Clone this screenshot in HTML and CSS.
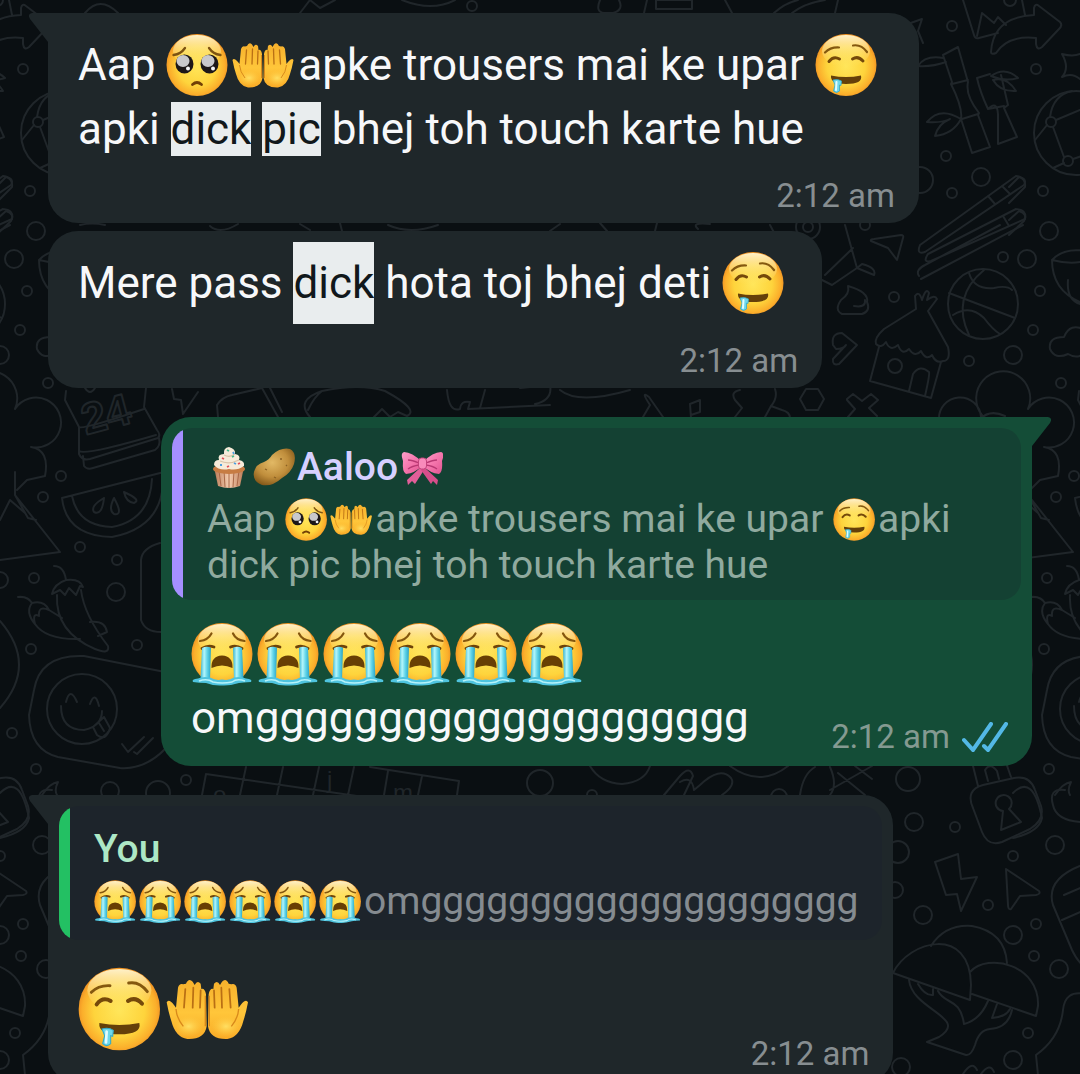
FILE: index.html
```html
<!DOCTYPE html>
<html lang="en">
<head>
<meta charset="utf-8">
<meta name="viewport" content="width=device-width, initial-scale=1">
<title>Chat</title>
<link rel="stylesheet" href="styles.css">
</head>
<body>
<svg class="wallpaper" aria-hidden="true">
  <defs>
    <radialGradient id="skin" cx="50%" cy="52%" r="52%">
      <stop offset="0" stop-color="#ffe65a"/><stop offset=".6" stop-color="#fed43c"/><stop offset=".88" stop-color="#fbae2b"/><stop offset="1" stop-color="#ee8f22"/>
    </radialGradient>
    <linearGradient id="shine" x1="0" y1="0" x2="0" y2="1">
      <stop offset="0" stop-color="#fff6d2" stop-opacity=".95"/><stop offset="1" stop-color="#ffe56b" stop-opacity="0"/>
    </linearGradient>
    <linearGradient id="tear" x1="0" y1="0" x2="1" y2="0">
      <stop offset="0" stop-color="#35b4d3"/><stop offset=".35" stop-color="#b4f6fb"/><stop offset=".65" stop-color="#5fd3e8"/><stop offset="1" stop-color="#2aa3c4"/>
    </linearGradient>
    <linearGradient id="palm" x1="0" y1="0" x2="0" y2="1">
      <stop offset="0" stop-color="#f6b02c"/><stop offset=".55" stop-color="#ffc63a"/><stop offset="1" stop-color="#f9ab27"/>
    </linearGradient>
    <radialGradient id="heel"><stop offset="0" stop-color="#ffdf62"/><stop offset="1" stop-color="#ffcb40" stop-opacity="0"/></radialGradient>
    <linearGradient id="cup" x1="0" y1="0" x2="1" y2="0">
      <stop offset="0" stop-color="#b97955"/><stop offset=".5" stop-color="#f5cdb0"/><stop offset="1" stop-color="#b97955"/>
    </linearGradient>
    <radialGradient id="spud" cx="45%" cy="38%" r="65%"><stop offset="0" stop-color="#e2b965"/><stop offset=".6" stop-color="#c08e3c"/><stop offset="1" stop-color="#845819"/></radialGradient>
    <linearGradient id="ribbon" x1="0" y1="0" x2="1" y2="1"><stop offset="0" stop-color="#ff9fc9"/><stop offset=".5" stop-color="#f576ad"/><stop offset="1" stop-color="#e0528f"/></linearGradient>

    <g id="e-face">
      <ellipse cx="33" cy="33" rx="30.500" ry="31" fill="url(#skin)"/>
      <ellipse cx="33" cy="19" rx="24" ry="16" fill="url(#shine)"/>
    </g>
    <symbol id="e-plead" viewBox="2 0 66 66">
      <use href="#e-face"/>
      <path d="M9.500 23Q17 22 21 16M45 16Q49 22 56.500 23" fill="none" stroke="#7d5312" stroke-width="2.300" stroke-linecap="round"/>
      <ellipse cx="20.500" cy="32" rx="9" ry="9.500" fill="#1c1718"/><ellipse cx="45.500" cy="32" rx="9" ry="9.500" fill="#1c1718"/>
      <ellipse cx="19" cy="29" rx="6.500" ry="6" fill="#c9c9cc"/><ellipse cx="44" cy="29" rx="6.500" ry="6" fill="#c9c9cc"/>
      <circle cx="24" cy="36.500" r="2" fill="#f4f4f6"/><circle cx="49" cy="36.500" r="2" fill="#f4f4f6"/>
      <path d="M28.500 52.500Q33 48.500 37.500 52.500" fill="none" stroke="#724006" stroke-width="2.800" stroke-linecap="round"/>
    </symbol>
    <symbol id="e-drool" viewBox="2 0 66 66">
      <use href="#e-face"/>
      <path d="M12 20.500Q17.500 15 26 15.500M40 13.500Q48 12 54 20" fill="none" stroke="#84580f" stroke-width="2.200" stroke-linecap="round"/>
      <path d="M16 29.500Q20.500 23.500 26.500 27M39.500 27Q45 23.500 50 29" fill="none" stroke="#75490a" stroke-width="3" stroke-linecap="round"/>
      <path d="M18 43.500Q33 46.500 48 43.500Q50 52 33 52Q17 52 18 43.500Z" fill="#65400a"/>
      <path d="M20 48Q25 46.500 28.500 49L28 53.500L26.500 53L26.500 59Q23.500 62 20.500 59L22 53Z" fill="#6fd8ea" stroke="#35aac8" stroke-width=".8"/>
      <path d="M23.500 50L23 58" stroke="#e1fcff" stroke-width="2" stroke-linecap="round"/>
    </symbol>
    <symbol id="e-cry" viewBox="2 0 66 66">
      <use href="#e-face"/>
      <path d="M11 20Q19 19 22.500 12.500M44 12.500Q47 19 55.500 20" fill="none" stroke="#84560e" stroke-width="2.200" stroke-linecap="round"/>
      <path d="M13 27.500Q19 23.500 25 26M41.500 26Q47 23.500 53 27.500" fill="none" stroke="#6e4309" stroke-width="2.800" stroke-linecap="round"/>
      <path d="M22.500 47Q22 35 33 34.500Q44 35 43.500 47Q33 42 22.500 47Z" fill="#683f04"/>
      <path d="M13 27Q18 24.500 22 27L21 58H11.500Z" fill="url(#tear)"/><path d="M53 27Q48 24.500 44 27L45 58H54.500Z" fill="url(#tear)"/>
      <path d="M4 61Q2 58 9 57.500Q14 55 21 56.500Q27 60 33 58.500Q40 60 45 56.500Q52 55 57 57.500Q64 58 62 61Q54 61.500 50 62Q40 65 33 64.500Q25 65 17 62Q10 62 4 61Z" fill="#4fc4df"/>
      <path d="M10 60Q18 57 24 61Q33 63 43 61Q48 57 56 60" fill="none" stroke="#b5f3fa" stroke-width="1.600"/>
    </symbol>
    <g id="e-hand">
      <path d="M32 22Q31 17 28.500 18L28 14Q25.500 11 23.500 15L22 12.500Q19 9.500 17 14L15 14.500Q12 13.500 11 17L9.500 32L8 30Q4 25 2.500 28Q4 36 6 42Q9 54 18 55.500Q31 56 32.500 46Z" fill="url(#palm)"/>
      <ellipse cx="19" cy="46" rx="11" ry="8" fill="url(#heel)"/>
      <path d="M16.500 18L15.500 32M22.500 17L22 32M28 19L27.500 32" stroke="#b96f14" stroke-width="1.300" stroke-linecap="round"/>
      <path d="M9.500 33Q10 40 15 46M31.500 23V46" stroke="#d8891b" stroke-width="1" fill="none"/>
    </g>
    <symbol id="e-palms" viewBox="2 0 66 66">
      <use href="#e-hand"/><g transform="matrix(-1 0 0 1 66 0)"><use href="#e-hand"/></g>
    </symbol>
    <symbol id="e-cupcake" viewBox="0 0 45 45">
      <path d="M7 22H37L33 41Q22 45 11 41Z" fill="url(#cup)"/>
      <path d="M12 26L14 41M17 26L18 42M22 26V43M27 26L26 42M32 26L30 41" stroke="#a96847" stroke-width="1"/>
      <ellipse cx="22" cy="24" rx="16" ry="5" fill="#c77c43"/>
      <path d="M7 20Q7 15 12 15Q10 9 17 9Q16 3 22 2Q29 4 28 9Q34 10 32 15Q38 16 37 21Q30 26 22 24Q12 26 7 20Z" fill="#f7ebd9"/>
      <path d="M13 16Q22 20 32 15M17 10Q23 13 28 9" fill="none" stroke="#d9c3a7" stroke-width="1.200"/>
      <path d="M20 5l2 1M25 12l2-1" stroke="#46b88a" stroke-width="1.800"/><path d="M15 13l2 1M31 19l2-1M20 22l2-1" stroke="#e24d57" stroke-width="1.800"/><path d="M26 7l1 2M13 20l2 0M27 18l2 1" stroke="#4b9fe0" stroke-width="1.800"/>
    </symbol>
    <symbol id="e-potato" viewBox="0 0 45 45">
      <path d="M20 10Q29 2 38 4Q45 8 42 19Q39 28 30 33Q20 42 10 40Q0 36 2 27Q4 19 12 17Q17 15 20 10Z" fill="url(#spud)"/>
      <path d="M13 24l2 1M28 14l2 0M22 32l2 1M34 20l1 1" stroke="#8b6224" stroke-width="1.300"/>
    </symbol>
    <symbol id="e-bow" viewBox="-2 0 45 45">
      <path d="M21 22L7 35L8 40L12 36L15 39L24 25Z" fill="#e25e99"/><path d="M24 22L38 35L37 40L33 36L31 39L21 25Z" fill="#d74e8b"/>
      <path d="M22 17Q12 7 4 7Q0 8 3 16Q2 27 6 29Q15 28 22 21Z" fill="url(#ribbon)"/><path d="M23 17Q33 7 41 7Q45 8 42 16Q43 27 39 29Q30 28 23 21Z" fill="url(#ribbon)"/>
      <path d="M19 18Q12 15 8 15M19 20Q12 21 8 24M26 18Q33 15 37 15M26 20Q33 21 37 24" stroke="#b93873" stroke-width="1.300" fill="none"/>
      <rect x="18.500" y="13" width="8" height="11" rx="3" fill="#f88bbb" stroke="#c4437c" stroke-width="1"/>
    </symbol>

    <g id="doodles">
      <circle cx="472" cy="6" r="5"/><circle cx="952" cy="26" r="5"/><circle cx="1010" cy="0" r="6"/><circle cx="1036" cy="69" r="5"/><circle cx="946" cy="156" r="5"/><circle cx="981" cy="177" r="9"/><circle cx="952" cy="193" r="5"/><circle cx="1043" cy="191" r="5"/><circle cx="920" cy="180" r="13"/>
      <circle cx="1049" cy="231" r="9"/><circle cx="1027" cy="259" r="9"/><circle cx="1003" cy="257" r="5"/><circle cx="1040" cy="291" r="5"/><circle cx="1033" cy="330" r="5"/><circle cx="1013" cy="355" r="9"/><circle cx="969" cy="361" r="5"/><circle cx="1061" cy="383" r="5"/><circle cx="894" cy="297" r="5"/><circle cx="865" cy="225" r="5"/>
      <circle cx="61" cy="476" r="5"/><circle cx="43" cy="497" r="5"/><circle cx="80" cy="547" r="5"/><circle cx="117" cy="560" r="5"/><circle cx="34" cy="578" r="5"/><circle cx="116" cy="592" r="9"/><circle cx="1013" cy="580" r="8"/>
      <circle cx="31" cy="649" r="5"/><circle cx="137" cy="645" r="5"/><circle cx="12" cy="733" r="5"/><circle cx="36" cy="769" r="5"/><circle cx="110" cy="791" r="9"/><circle cx="186" cy="780" r="5"/><circle cx="158" cy="793" r="12"/><circle cx="592" cy="795" r="5"/><circle cx="540" cy="783" r="13"/><circle cx="779" cy="797" r="8"/>
      <circle cx="908" cy="779" r="12"/><circle cx="914" cy="822" r="9"/><circle cx="955" cy="827" r="5"/><circle cx="898" cy="852" r="11"/><circle cx="895" cy="890" r="8"/><circle cx="923" cy="915" r="9"/><circle cx="1013" cy="856" r="5"/><circle cx="1055" cy="845" r="9"/><circle cx="988" cy="905" r="5"/><circle cx="1036" cy="924" r="5"/><circle cx="1013" cy="935" r="9"/><circle cx="1034" cy="956" r="5"/><circle cx="1059" cy="969" r="9"/><circle cx="1028" cy="1033" r="5"/><circle cx="1013" cy="1060" r="9"/><circle cx="901" cy="1067" r="9"/>
      <!-- picture and arrow -->
      <path d="M963 0L974 35Q975 39 979 38L998 33M977 36L982 13L994 23L998 17L1006 25M1022 0L1025 15M991 52Q993 17 1034 15V8Q1035 3 1039 6L1060 22Q1063 25 1059 29L1042 47Q1037 51 1036 44V38Q1008 35 996 53Q991 55 991 52"/>
      <!-- mountains and stars along the top edge -->
      <path d="M85 13Q100 -5 118 13M300 13L310 0L320 8L335 0M600 0Q595 12 604 13H613Q624 10 619 0M644 13L647 0M656 0H692V9H656ZM725 0L732 13M774 13Q785 3 798 0M792 13Q805 3 825 0M835 13L838 0M402 0Q432 12 455 0"/>
      <path d="M1062 54Q1073 57 1080 54M1062 54Q1070 68 1062 77Q1072 72 1080 79M905 25L922 19L918 31L923 43"/>
      <!-- bamboo -->
      <path d="M943 55L958 47L968 82Q965 95 979 113L978 115L990 147L972 153L961 119Q963 108 951 84L952 82ZM952 84L968 80M962 119L978 114M977 78L990 74M1001 75L1008 105L1004 108L1017 137L998 144V114Q997 100 988 109Q980 92 977 78M988 109L1004 106M943 58Q925 55 918 66Q932 67 946 62M991 76Q1005 66 1018 78Q1005 82 991 76M993 80Q1007 76 1016 91Q1000 92 993 80M961 119Q940 106 927 122Q943 123 950 119Q938 124 935 136Q953 134 961 119"/>
      <!-- beach ball -->
      <circle cx="1076" cy="133" r="42"/><circle cx="1051" cy="122" r="5"/><circle cx="1068" cy="161" r="5"/><path d="M1035 140L1047 125M1050 117Q1053 95 1072 91M1056 120L1080 110M1053 127L1064 157M1073 159L1085 155M1053 168L1064 163"/>
      <!-- chopsticks -->
      <path d="M1016 176L920 245Q916 255 925 252L1024 185Q1028 178 1016 176M1016 209L928 254Q922 263 931 261L1025 219Q1027 210 1016 209M919 276Q915 270 925 265L1000 225M921 279L1023 225M1002 186L1010 194M988 196L995 204M1003 216L1009 226"/>
      <!-- pills -->
      <path d="M1009 187L1019 177Q1026 179 1025 187L1009 203M1009 220L1019 211Q1028 214 1024 221L1009 235"/>
      <!-- rocket -->
      <path d="M770 225L778 240M845 225L857 268L832 285L822 280M853 248L825 275M857 268L874 275Q877 268 862 264L857 268"/><circle cx="808" cy="227" r="12"/><circle cx="808" cy="227" r="5"/>
      <path d="M871 241Q870 239 874 239L901 235Q904 235 903 238L897 260L888 248Z"/>
      <path d="M848 286Q850 294 841 300Q834 310 842 314H862Q871 311 867 302Q869 292 848 286M854 306Q866 308 865 300"/>
      <path d="M833 345Q831 333 842 333L857 345L839 364Q832 366 833 359L846 345Q844 349 836 349Z"/>
      <!-- basketball -->
      <circle cx="983" cy="304" r="35"/><path d="M949 293L1015 318M984 270Q951 297 969 335M969 273Q974 290 994 288Q1007 285 1012 290M953 315Q970 304 984 318Q993 330 1000 334"/>
      <!-- hut -->
      <path d="M916 309L884 329Q874 338 876 344Q881 349 886 342Q890 352 898 345Q902 356 909 349Q915 358 921 351Q926 361 932 355Q936 364 943 361Q951 361 948 347L928 311M916 309L915 296Q919 290 922 300Q926 287 929 293L927 300Q935 294 937 299L928 311M879 347L870 381L931 398L941 362M909 391L913 374Q920 364 929 372Q930 374 925 396"/><circle cx="895" cy="366" r="7"/>
      <!-- cup and cloud -->
      <path d="M1052 260Q1065 246 1090 252M1052 260Q1075 266 1090 259M1052 260Q1052 290 1080 302M1068 280Q1066 303 1085 305M1085 330Q1070 322 1064 337Q1048 337 1050 349Q1055 360 1068 354Q1078 360 1085 352"/>
      <!-- tree -->
      <path d="M982 415A27 27 0 1 1 1028 409M939 420A20 20 0 0 1 981 417M1028 409A25 25 0 1 1 1044 447M980 419Q990 409 1005 416M1044 447Q1063 450 1058 476L1040 480L1030 490"/>
      <path d="M806 389L818 389L824 399L818 410H806L800 399ZM847 399L853 394L862 401L871 394L878 400L869 408L877 416M847 400L855 409L848 417M691 418L690 404L700 400V412L691 415"/>
      <!-- mixed doodles between the messages -->
      <path d="M172 389L174 399L181 400L183 414L198 392M218 417L217 405Q222 397 232 395L262 388L278 417M270 388L282 412M310 417Q295 400 322 391Q360 383 385 391Q420 410 407 416L398 412L390 417L382 409L374 417M308 410Q314 397 322 391M447 390Q449 413 460 409Q461 400 470 402L468 409L550 405M485 390L480 408M520 388L550 385Q553 400 535 404M560 390Q578 405 630 390M643 417L650 405Q640 390 649 397L663 417M735 417L742 408L735 400Q730 392 740 390M765 417L771 406L782 410Q790 412 790 418M775 389Q778 398 771 406"/>
      <path d="M80 225Q92 222 105 225M210 226Q220 235 238 224M300 224L310 230M340 223L342 231M388 225Q410 235 438 225M560 224L550 231M600 223L607 231M657 223L655 231M698 229Q690 222 710 224"/>
      <!-- calendar -->
      <path d="M66 391L65 400L79 427V454Q82 461 90 459L158 438Q161 435 157 430L144 407L146 388M79 427Q82 430 144 409M79 451Q84 456 156 435M83 456L84 466Q87 470 93 468L155 450Q161 446 159 438M85 388Q90 396 95 388"/>
      <text class="outline" x="86" y="435" transform="rotate(-15 86 435)">24</text>
      <!-- watermelon -->
      <path d="M62 498L168 471M62 498Q66 536 112 537Q160 528 163 484M72 496Q78 526 112 527Q150 520 152 479M104 498Q90 506 94 512Q102 516 104 498M114 498Q108 510 114 514Q124 516 114 498M124 492Q126 502 134 503Q142 500 124 492"/>
      <path d="M15 472V495L60 552L0 560M15 495L28 518L36 520M0 520L10 500L25 513"/>
      <!-- chilies -->
      <path d="M54 566Q64 566 66 580Q54 584 52 594L60 590L65 595L69 588L76 595L80 586L83 587Q80 578 66 580M57 595Q55 632 95 649Q110 655 108 646Q84 615 81 590M18 597Q28 596 32 603Q44 600 49 610Q38 605 39 616Q32 612 35 624Q25 612 32 603M35 624Q46 640 80 639M49 610L62 618M90 622Q105 620 107 632L98 636"/>
      <path d="M160 543Q142 548 141 560V620Q145 632 161 632"/>
      <!-- sticker -->
      <path d="M165 672L84 656Q40 654 34 690L29 715Q30 750 58 757L120 768Q145 770 166 748"/><circle cx="82" cy="709" r="35"/>
      <path d="M66 702Q70 686 77 702M90 704Q95 690 99 706M61 706Q61 730 84 730Q102 726 102 711M93 727L104 717L110 728Q106 742 97 735ZM99 723L104 731M122 744L128 752L144 737M134 752L137 754L153 738"/>
      <path d="M1013 621Q1051 665 1013 708"/>
      <!-- word grid -->
      <path d="M206 774L460 811M206 774L202 795M246 767L240 795M283 767L277 795M319 767L313 795M354 767L348 795M388 771L384 795M422 776L418 795M370 767L459 781L457 795"/>
      <text class="letter" x="327" y="788">j</text><text class="letter" x="393" y="801">m</text><text class="letter" x="213" y="803">o</text>
      <path d="M0 793Q20 773 29 818Q26 832 0 838M1065 790Q1048 788 1053 805Q1056 820 1080 822M42 795Q50 783 58 782Q54 790 57 795M590 766Q600 783 622 784Q645 782 650 766M664 795L680 776Q690 765 693 776L684 795M680 782Q692 775 694 790L700 785Q720 766 731 778Q736 785 722 795M730 766Q760 788 788 766M800 795Q803 774 815 767M830 767Q838 785 830 795M838 773L865 795M872 766L830 790M855 766L872 779"/>
      <!-- padlock -->
      <path d="M973 808Q965 790 983 785L1014 778Q1030 775 1035 790L1041 806Q1045 820 1030 829L1002 842Q988 847 982 832ZM978 786L973 766M988 781L985 770Q990 762 997 771L999 779M1011 777L1004 757M1001 830L1003 811A8 8 0 1 1 1009 809L1021 822Z"/>
      <path d="M935 862L958 854L961 879L977 877L961 911L957 894L946 895ZM1006 869L1039 891Q1041 894 1036 895L1020 896L1011 909Q1008 910 1008 905Z"/>
      <!-- mushrooms -->
      <path d="M893 973C909 940 970 925 971 985L970 1000ZM931 946Q945 924 972 926Q1005 932 1007 963M970 972C988 952 1040 965 1038 1006L1036 1016L972 994M909 980C912 1010 970 1018 939 1037L927 1042L966 1055Q971 1056 975 1045Q979 1030 990 1029Q1008 1028 1012 1010M938 991C945 1005 960 997 964 1024Q980 1020 988 1001M918 984Q925 996 933 995V989M997 1004L992 1018Q1006 1017 1010 1009"/>
      <path d="M1053 905Q1045 878 1085 864M1053 905L1072 950Q1080 967 1092 970M1064 895L1085 886M1062 920L1085 910M1038 1075L1036 1055Q1060 1038 1063 1010Q1065 990 1085 994M963 1074Q972 1060 977 1070M981 1074Q990 1062 994 1072"/>
    </g>
  </defs>
  <use href="#doodles"/>
  <use href="#doodles" x="-1013"/>
  <use href="#doodles" x="1013"/>
</svg>

<main class="chat">
  <article class="bubble in tail long">
    <p class="text">Aap <svg class="emo" role="img" aria-label="pleading face"><use href="#e-plead"/></svg><svg class="emo" role="img" aria-label="palms up"><use href="#e-palms"/></svg>apke trousers mai ke upar <svg class="emo" role="img" aria-label="drooling face"><use href="#e-drool"/></svg> apki <mark>dick</mark> <mark>pic</mark> bhej toh touch karte hue</p>
    <footer class="meta"><time>2:12 am</time></footer>
  </article>

  <article class="bubble in single">
    <p class="text">Mere pass <mark>dick</mark> hota toj bhej deti <svg class="emo" role="img" aria-label="drooling face"><use href="#e-drool"/></svg></p>
    <footer class="meta"><time>2:12 am</time></footer>
  </article>

  <article class="bubble out tail long turn">
    <blockquote class="quote">
      <p class="name"><svg class="emo" role="img" aria-label="cupcake"><use href="#e-cupcake"/></svg><svg class="emo" role="img" aria-label="potato"><use href="#e-potato"/></svg>Aaloo<svg class="emo" role="img" aria-label="ribbon"><use href="#e-bow"/></svg></p>
      <p class="cite">Aap <svg class="emo" role="img" aria-label="pleading face"><use href="#e-plead"/></svg><svg class="emo" role="img" aria-label="palms up"><use href="#e-palms"/></svg>apke trousers mai ke upar <svg class="emo" role="img" aria-label="drooling face"><use href="#e-drool"/></svg>apki dick pic bhej toh touch karte hue</p>
    </blockquote>
    <div class="row">
      <p class="text"><svg class="emo" role="img" aria-label="crying face"><use href="#e-cry"/></svg><svg class="emo" role="img" aria-label="crying face"><use href="#e-cry"/></svg><svg class="emo" role="img" aria-label="crying face"><use href="#e-cry"/></svg><svg class="emo" role="img" aria-label="crying face"><use href="#e-cry"/></svg><svg class="emo" role="img" aria-label="crying face"><use href="#e-cry"/></svg><svg class="emo" role="img" aria-label="crying face"><use href="#e-cry"/></svg><br>omgggggggggggggggggggg</p>
      <footer class="meta"><time>2:12 am</time>
        <svg class="ticks" viewBox="0 0 46 30" role="img" aria-label="read"><path d="M2 18L11 28L29 2M22 24L26 28L44 2"/></svg>
      </footer>
    </div>
  </article>

  <article class="bubble in tail turn">
    <blockquote class="quote short">
      <p class="name">You</p>
      <p class="cite"><svg class="emo" role="img" aria-label="crying face"><use href="#e-cry"/></svg><svg class="emo" role="img" aria-label="crying face"><use href="#e-cry"/></svg><svg class="emo" role="img" aria-label="crying face"><use href="#e-cry"/></svg><svg class="emo" role="img" aria-label="crying face"><use href="#e-cry"/></svg><svg class="emo" role="img" aria-label="crying face"><use href="#e-cry"/></svg><svg class="emo" role="img" aria-label="crying face"><use href="#e-cry"/></svg>omgggggggggggggggggggg</p>
    </blockquote>
    <div class="row big">
      <p class="text"><svg class="emo" role="img" aria-label="drooling face"><use href="#e-drool"/></svg><svg class="emo" role="img" aria-label="palms up"><use href="#e-palms"/></svg></p>
      <footer class="meta"><time>2:12 am</time></footer>
    </div>
  </article>
</main>
</body>
</html>
```
FILE: styles.css
```css
* { box-sizing: border-box; }

body {
  margin: 0;
  height: 100vh;
  overflow: hidden;
  position: relative;
  background: #0a0f12;
  color: #f7f8fa;
  font: 44px/64px Roboto, "Noto Sans", sans-serif;
}

p, blockquote { margin: 0; }

.wallpaper {
  position: absolute;
  inset: 0;
  width: 100%;
  height: 100%;
  fill: none;
  stroke: #20262a;
  stroke-width: 2;
  stroke-linejoin: round;
  stroke-linecap: round;
}
.outline { font: 700 44px "Liberation Sans", sans-serif; }
.letter { font: 24px "Liberation Sans", sans-serif; fill: #20262a; stroke: none; }

.chat {
  position: relative;
  display: flex;
  flex-direction: column;
  align-items: flex-start;
  gap: 8px;
  padding: 13px 48px;
}

.bubble {
  position: relative;
  display: flex;
  flex-direction: column;
  max-width: calc(100% - 113px);
  padding: 20px 24px 7px 30px;
  border-radius: 30px;
  background: #1f272a;
}
.long { width: 100%; }
.turn { margin-top: 21px; padding: 11px 11px 7px; }
.out { align-self: flex-end; background: #144d37; }
.in.tail { border-top-left-radius: 0; }
.out.tail { border-top-right-radius: 0; }

.tail::before {
  content: "";
  position: absolute;
  top: 0;
  left: -20px;
  width: 21px;
  height: 29px;
  background: inherit;
  clip-path: path("M21 0H4Q-1 1 2 6L20 29H21Z");
}
.out.tail::before {
  left: auto;
  right: -20px;
  transform: scaleX(-1);
}

.emo {
  width: 66px;
  height: 66px;
  margin: -12px 0;
  vertical-align: -6px;
}
mark { padding: 1px 0; background: #e9edee; color: #11181b; }

.single { padding-top: 11px; }
.single .text { margin-right: 10px; line-height: 82px; }
.single mark { padding: 15px 0; }
.single .meta { margin-top: 17px; }

.meta {
  display: flex;
  align-items: center;
  gap: 12px;
  align-self: flex-end;
  margin-top: 15px;
  font-size: 33px;
  line-height: 40px;
  color: #878e91;
  white-space: nowrap;
}
.out .meta { color: #849a91; }
.ticks {
  width: 46px;
  height: 30px;
  fill: none;
  stroke: #53b8e5;
  stroke-width: 4;
  stroke-linecap: round;
}

.quote {
  padding: 12px 24px 12px 35px;
  border-radius: 20px;
  background: linear-gradient(#a58fff, #a58fff) 0 0 / 11px 100% no-repeat #144133;
  font-size: 39px;
  line-height: 46px;
  color: #90aa9f;
}
.quote .name { margin-bottom: 2px; line-height: 54px; font-weight: 500; color: #d6d0ff; }
.quote .emo { width: 45px; height: 45px; vertical-align: 2px; }
.in .quote {
  background: linear-gradient(#23c063, #23c063) 0 0 / 11px 100% no-repeat #1d242b;
  color: #858b90;
}
.in .quote .name { color: #ade8c6; }
.quote.short { padding-top: 16px; padding-bottom: 16px; }

.row {
  display: flex;
  justify-content: space-between;
  align-items: flex-end;
  padding: 22px 13px 2px 19px;
}
.row .text { margin: 0 0 7px; }
.row .meta { margin: 0; }
.row.big { padding-top: 25px; }
.big .text { display: flex; margin-bottom: 21px; }
.big .emo { width: 88px; height: 88px; margin: 0; }
```
